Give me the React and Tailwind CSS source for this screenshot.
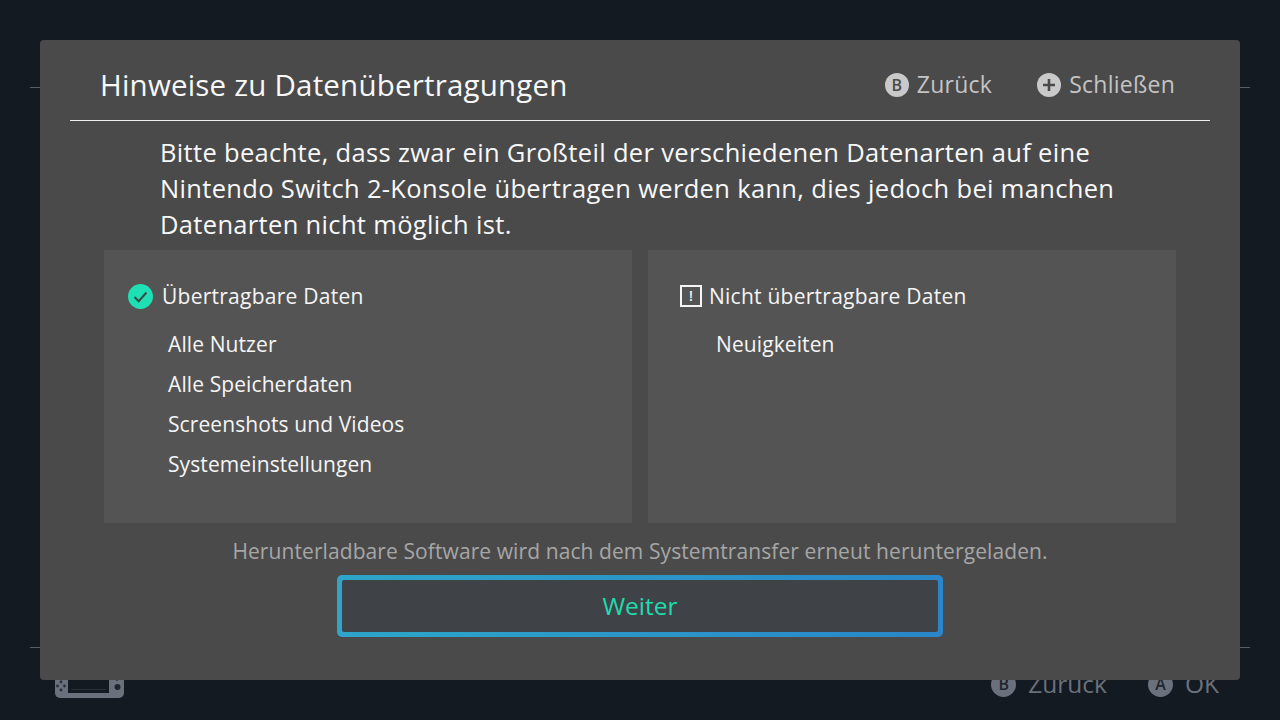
const F = "font-['Open_Sans',sans-serif]";

function SwitchIcon() {
  return (
    <svg width="70" height="26" viewBox="0 0 70 26" className="mt-[2px] block">
      <path d="M0 0H13V26H5a5 5 0 0 1-5-5Z" fill="#6a717c" />
      <path d="M54 0H69V21a5 5 0 0 1-5 5H54Z" fill="#6a717c" />
      <rect x="13" y="21" width="41" height="5" fill="#6a717c" />
      <rect x="13" y="0" width="41" height="21" fill="#141a22" />
      <rect x="16" y="17" width="35" height="1" fill="#2a2f38" />
      <circle cx="6" cy="10" r="1.4" fill="#2a2f38" /><circle cx="6" cy="18" r="1.4" fill="#2a2f38" />
      <circle cx="2.5" cy="14" r="1.4" fill="#2a2f38" /><circle cx="9.5" cy="14" r="1.4" fill="#2a2f38" />
      <circle cx="62.5" cy="15" r="3" fill="#20252d" />
      <circle cx="62" cy="8" r="1" fill="#2a2f38" />
    </svg>
  );
}

function Btn({ letter, label }) {
  return (
    <div className="flex items-center gap-[8px]">
      <span className="flex h-6 w-6 items-center justify-center rounded-full bg-[#c9c9c9] text-[16px] font-semibold leading-none tracking-normal text-[#4a4a4a]">{letter}</span>
      <span>{label}</span>
    </div>
  );
}

function Background() {
  return (
    <div className="flex h-[720px] w-[1280px] flex-col justify-between bg-[#141a22] px-[30px]">
      <div className="mt-[87px] h-px bg-[#5a5f66]" />
      <div>
        <div className="h-px bg-[#5a5f66]" />
        <div className="flex h-[72px] items-center justify-between pl-[25px] pr-[1px] text-[24.5px] text-[#6a717c]">
          <SwitchIcon />
          <div className="flex items-center gap-[41px] pr-[30px]">
            <div className="flex items-center gap-[12px]">
              <span className="flex h-[25px] w-[25px] items-center justify-center rounded-full bg-[#6a717c] text-[16px] font-semibold text-[#20252d]">B</span>
              <span>Zurück</span>
            </div>
            <div className="flex items-center gap-[12px]">
              <span className="flex h-[25px] w-[25px] items-center justify-center rounded-full bg-[#6a717c] text-[16px] font-semibold text-[#20252d]">A</span>
              <span>OK</span>
            </div>
          </div>
        </div>
      </div>
    </div>
  );
}

function Panel({ icon, title, items, head, indent }) {
  return (
    <div className="flex h-[273px] flex-1 flex-col bg-[#545454] pt-[31px] text-[21px] text-[#f5f5f5]">
      <div className={"flex h-[30px] items-center leading-[30px] tracking-[0.25px] " + head}>
        {icon}
        <span>{title}</span>
      </div>
      <div className={"flex flex-col pt-[13px] leading-[40px] tracking-[0.1px] " + indent}>
        {items.map((t) => <div key={t}>{t}</div>)}
      </div>
    </div>
  );
}

export default function App() {
  return (
    <div className={"relative h-[720px] w-[1280px] overflow-hidden " + F}>
      <Background />
      <div className="absolute left-[40px] top-[40px] flex h-[640px] w-[1200px] flex-col rounded-[4px] bg-[#4a4a4a] px-[30px]">
        <div className="flex h-[81px] shrink-0 items-center justify-between border-b border-[#f0f0f0] pl-[30px] pr-[35px] pt-[9px]">
          <h1 className="text-[29.5px] font-normal leading-none tracking-[0.2px] text-[#f8f8f8]">Hinweise zu Datenübertragungen</h1>
          <div className="flex items-center gap-[45px] text-[23px] tracking-[0.25px] text-[#c4c4c4]">
            <Btn letter="B" label="Zurück" />
            <div className="flex items-center gap-[8px]">
              <svg width="24" height="24" viewBox="0 0 24 24">
                <circle cx="12" cy="12" r="12" fill="#c9c9c9" />
                <path d="M12 6v12M6 12h12" stroke="#4a4a4a" strokeWidth="2.6" />
              </svg>
              <span>Schließen</span>
            </div>
          </div>
        </div>
        <p className="mt-[13px] pl-[90px] text-[25.5px] leading-[36px] tracking-[0.33px] text-[#f8f8f8]">
          Bitte beachte, dass zwar ein Großteil der verschiedenen Datenarten auf eine<br />
          Nintendo Switch 2-Konsole übertragen werden kann, dies jedoch bei manchen<br />
          Datenarten nicht möglich ist.
        </p>
        <div className="mt-[8px] flex gap-[16px] px-[34px]">
          <Panel
            title="Übertragbare Daten"
            head="pl-[24px]"
            indent="pl-[64px]"
            items={["Alle Nutzer", "Alle Speicherdaten", "Screenshots und Videos", "Systemeinstellungen"]}
            icon={
              <svg width="25" height="25" viewBox="0 0 25 25" className="mr-[9px]">
                <circle cx="12.5" cy="12.5" r="12.5" fill="#1ee0b4" />
                <path d="M6.5 13l4.2 4.2L18.5 8.5" fill="none" stroke="#3a4a48" strokeWidth="2" />
              </svg>
            }
          />
          <Panel
            title="Nicht übertragbare Daten"
            head="pl-[32px]"
            indent="pl-[68px]"
            items={["Neuigkeiten"]}
            icon={
              <span className="mr-[7px] flex h-[22px] w-[22px] items-center justify-center border-2 border-[#f5f5f5] text-[14px] font-semibold leading-none">!</span>
            }
          />
        </div>
        <p className="mt-[14px] text-center text-[21px] leading-[28px] tracking-[0.09px] text-[#a6a6a6]">
          Herunterladbare Software wird nach dem Systemtransfer erneut heruntergeladen.
        </p>
        <div className="mx-auto mt-[10px] h-[62px] w-[606px] rounded-[5px] bg-linear-to-r from-[#2ea6c8] to-[#2a86c8] p-[5px]">
          <button className="flex h-full w-full items-center justify-center rounded-[2px] bg-[#3f4246] text-[24.5px] text-[#1fdcae]">
            Weiter
          </button>
        </div>
      </div>
    </div>
  );
}
